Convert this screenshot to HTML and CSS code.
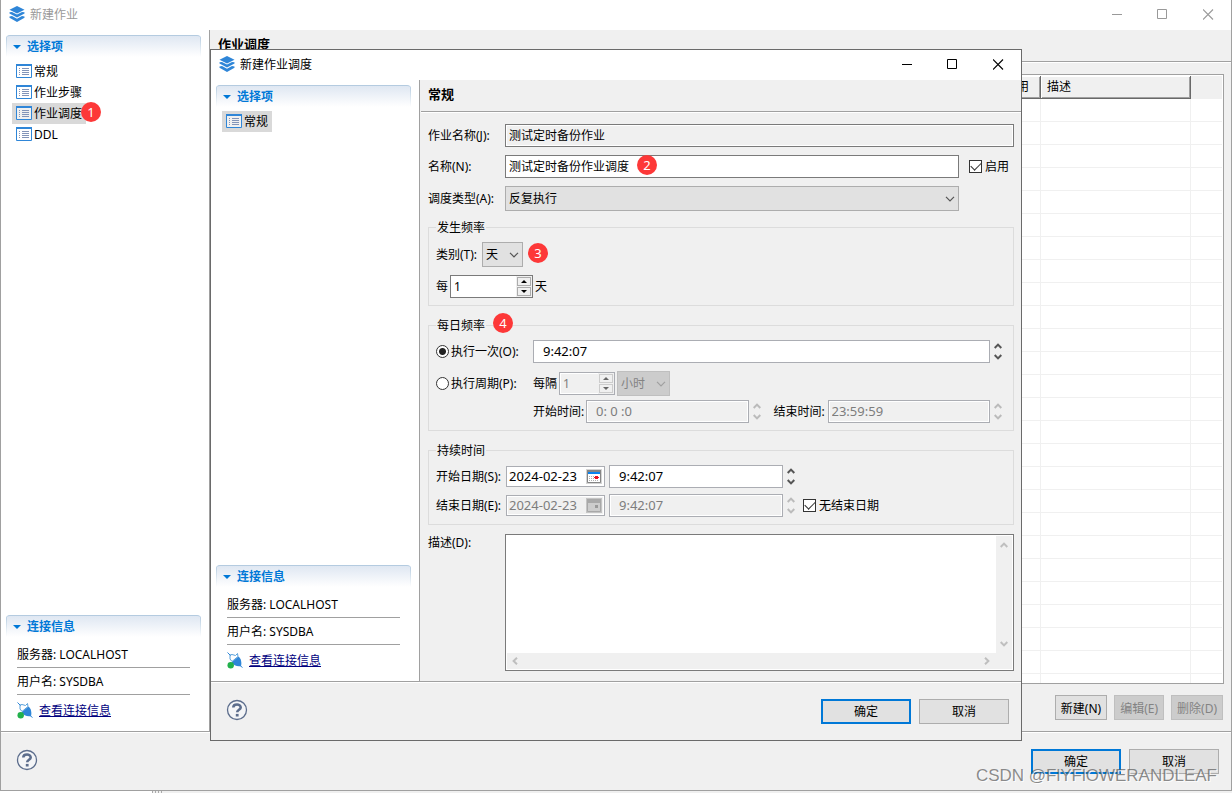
FILE: index.html
```html
<!DOCTYPE html>
<html lang="zh-CN">
<head>
<meta charset="utf-8">
<title>新建作业</title>
<link rel="stylesheet" href="styles.css">
</head>
<body>
<svg class="defs" aria-hidden="true">
  <symbol id="logo" viewBox="0 0 16 16">
    <path fill="#2f86d8" d="M8 0 15.500 3.700 8 7.600.500 3.700Z"/>
    <path fill="#2f86d8" d="M.500 6.200 3 5.900 8 8.600 13 5.900 15.500 6.200V7.500L8 11.600.500 7.500Z"/>
    <path fill="#2f86d8" d="M.500 10.400 3 10 8 12.700 13 10 15.500 10.400V11.700L8 15.900.500 11.700Z"/>
  </symbol>
  <symbol id="list" viewBox="0 0 16 15">
    <path fill="#fff" fill-opacity=".6" stroke="#2f86d8" d="M.5.5h15v13H.5z"/>
    <path fill="#2f86d8" d="M0 0h16v2H0z"/>
    <path stroke="#8294b8" d="M3 4.500h1M6 4.500h7M3 6.500h1M6 6.500h7M3 8.500h1M6 8.500h7M3 10.500h1M6 10.500h7"/>
  </symbol>
  <symbol id="plug" viewBox="0 0 16 17">
    <path fill="#fff" stroke="#5aa2dc" d="M3 3 5 2.500 8.500 3.500 10.500 1.500 11 4.500 5 9.500 3 7Z"/>
    <path stroke="#2f86d8" d="m.5.500 3 3M13 13.500l2.500 2"/>
    <path fill="#2f86d8" d="M4.500 10.500 11.500 4.500c2.300 1.800 3.500 6 2.500 9.500-3.500.8-7.500-.5-9.500-3.500Z"/>
    <circle cx="3.700" cy="13.300" r="3.200" fill="#22b14c"/>
  </symbol>
  <symbol id="help" viewBox="0 0 22 22">
    <circle cx="11" cy="11" r="9.500" fill="#f4f5f7" stroke="#5c6d8c" stroke-width="1.300"/>
    <path fill="none" stroke="#5c6d8c" stroke-width="2.600" d="M7.300 8.600C7.300 4.600 14.700 4.600 14.700 8.400 14.700 10.800 11.200 10.800 11.200 13.300"/>
    <path fill="#5c6d8c" d="M9.800 14.900h2.800v2.600H9.800z"/>
  </symbol>
  <symbol id="min" viewBox="0 0 11 11"><path stroke="currentColor" d="M1 5.500h10"/></symbol>
  <symbol id="max" viewBox="0 0 11 11"><path fill="none" stroke="currentColor" d="M.5.5h9v9h-9z"/></symbol>
  <symbol id="close" viewBox="0 0 11 11"><path stroke="currentColor" stroke-width="1.100" d="m0 .500 10 10M10 .500l-10 10"/></symbol>
  <symbol id="down" viewBox="0 0 10 6"><path fill="none" stroke="currentColor" stroke-width="1.200" d="m1 .8 4 4 4-4"/></symbol>
  <symbol id="chev" viewBox="0 0 8 6"><path fill="none" stroke="currentColor" stroke-width="2" d="m.7 5 3.300-3.400L7.300 5"/></symbol>
  <symbol id="tri" viewBox="0 0 6 3"><path fill="currentColor" d="M3 0 6 3H0z"/></symbol>
  <symbol id="cal" viewBox="0 0 16 15">
    <path fill="#d4d4d4" d="M0 0h16v15H0z"/>
    <path fill="#fff" stroke="#858585" d="M1.500 1.500h13v12h-13z"/>
    <path fill="#858585" d="M1 1h14v2H1z"/>
    <path fill="#0a84f0" d="M2 3h12v2H2z"/>
    <path stroke="#b0b0b0" stroke-dasharray="1 1" d="M3 7.500h6M3 9.500h5M3 11.500h10"/>
    <path fill="#e81123" d="M9 7h3v3H9zM8 8h5v1H8z"/>
  </symbol>
  <symbol id="cal-off" viewBox="0 0 16 15">
    <path fill="#c4c4c4" d="M0 0h16v15H0z"/>
    <path fill="#ccc" stroke="#a8a8a8" d="M1.500 1.500h13v12h-13z"/>
    <path fill="#a8a8a8" d="M1 1h14v4H1z"/>
    <path fill="#999" d="M9 7h3v3H9z"/>
  </symbol>
</svg>

<main class="window window-main">
  <header class="titlebar">
    <svg class="logo"><use href="#logo"/></svg>
    <span class="title">新建作业</span>
    <button class="winbtn" aria-label="最小化"><svg><use href="#min"/></svg></button>
    <button class="winbtn" aria-label="最大化"><svg><use href="#max"/></svg></button>
    <button class="winbtn" aria-label="关闭"><svg><use href="#close"/></svg></button>
  </header>
  <div class="body">
    <aside class="sidebar">
      <section>
        <h2 class="section-title">选择项</h2>
        <ul class="tree">
          <li><svg><use href="#list"/></svg>常规</li>
          <li><svg><use href="#list"/></svg>作业步骤</li>
          <li class="selected"><svg><use href="#list"/></svg>作业调度<span class="badge badge-tree">1</span></li>
          <li><svg><use href="#list"/></svg>DDL</li>
        </ul>
      </section>
      <section class="info">
        <h2 class="section-title">连接信息</h2>
        <p>服务器: LOCALHOST</p>
        <p>用户名: SYSDBA</p>
        <div class="info-link"><svg><use href="#plug"/></svg><a href="#">查看连接信息</a></div>
      </section>
    </aside>
    <div class="pane">
      <h1 class="pane-title">作业调度</h1>
      <div class="jobs">
        <div class="table-box">
          <table>
            <colgroup><col><col class="c-enabled"><col class="c-desc"><col class="c-rest"></colgroup>
            <thead><tr><th></th><th>启用</th><th>描述</th><td></td></tr></thead>
            <tbody>
              <tr><td></td><td></td><td></td><td></td></tr><tr><td></td><td></td><td></td><td></td></tr>
              <tr><td></td><td></td><td></td><td></td></tr><tr><td></td><td></td><td></td><td></td></tr>
              <tr><td></td><td></td><td></td><td></td></tr><tr><td></td><td></td><td></td><td></td></tr>
              <tr><td></td><td></td><td></td><td></td></tr><tr><td></td><td></td><td></td><td></td></tr>
              <tr><td></td><td></td><td></td><td></td></tr><tr><td></td><td></td><td></td><td></td></tr>
              <tr><td></td><td></td><td></td><td></td></tr><tr><td></td><td></td><td></td><td></td></tr>
              <tr><td></td><td></td><td></td><td></td></tr><tr><td></td><td></td><td></td><td></td></tr>
              <tr><td></td><td></td><td></td><td></td></tr><tr><td></td><td></td><td></td><td></td></tr>
              <tr><td></td><td></td><td></td><td></td></tr><tr><td></td><td></td><td></td><td></td></tr>
              <tr><td></td><td></td><td></td><td></td></tr><tr><td></td><td></td><td></td><td></td></tr>
              <tr><td></td><td></td><td></td><td></td></tr><tr><td></td><td></td><td></td><td></td></tr>
              <tr><td></td><td></td><td></td><td></td></tr><tr><td></td><td></td><td></td><td></td></tr>
              <tr><td></td><td></td><td></td><td></td></tr><tr><td></td><td></td><td></td><td></td></tr>
            </tbody>
          </table>
        </div>
        <div class="actions">
          <button class="btn">新建(N)</button>
          <button class="btn" disabled>编辑(E)</button>
          <button class="btn" disabled>删除(D)</button>
        </div>
      </div>
    </div>
  </div>
  <footer class="footer">
    <button class="help" aria-label="帮助"><svg><use href="#help"/></svg></button>
    <button class="btn wide primary">确定</button>
    <button class="btn wide">取消</button>
  </footer>
</main>
<div class="desktop"><span></span></div>

<div class="window dialog" role="dialog" aria-label="新建作业调度">
  <header class="titlebar">
    <svg class="logo"><use href="#logo"/></svg>
    <span class="title">新建作业调度</span>
    <button class="winbtn" aria-label="最小化"><svg><use href="#min"/></svg></button>
    <button class="winbtn" aria-label="最大化"><svg><use href="#max"/></svg></button>
    <button class="winbtn" aria-label="关闭"><svg><use href="#close"/></svg></button>
  </header>
  <div class="body">
    <aside class="sidebar">
      <section>
        <h2 class="section-title">选择项</h2>
        <ul class="tree">
          <li class="selected"><svg><use href="#list"/></svg>常规</li>
        </ul>
      </section>
      <section class="info">
        <h2 class="section-title">连接信息</h2>
        <p>服务器: LOCALHOST</p>
        <p>用户名: SYSDBA</p>
        <div class="info-link"><svg><use href="#plug"/></svg><a href="#">查看连接信息</a></div>
      </section>
    </aside>
    <div class="pane">
      <h1 class="pane-title">常规</h1>
      <form class="form">
        <div class="row">
          <label class="name" for="job">作业名称(J):</label>
          <input class="text grow" id="job" type="text" value="测试定时备份作业" readonly>
        </div>
        <div class="row">
          <label class="name" for="name">名称(N):</label>
          <div class="field grow">
            <input class="text" id="name" type="text" value="测试定时备份作业调度">
            <span class="badge badge-name">2</span>
          </div>
          <label class="check enable"><input type="checkbox" checked>启用</label>
        </div>
        <div class="row">
          <label class="name" for="type">调度类型(A):</label>
          <div class="field grow">
            <select id="type"><option>反复执行</option></select>
            <svg class="arrow"><use href="#down"/></svg>
          </div>
          <span class="enable"></span>
        </div>

        <fieldset>
          <legend>发生频率</legend>
          <div class="row">
            <label class="kind" for="kind">类别(T):</label>
            <div class="field w-kind">
              <select id="kind"><option>天</option></select>
              <svg class="arrow"><use href="#down"/></svg>
            </div>
            <span class="badge badge-kind">3</span>
          </div>
          <div class="row near">
            <label for="every">每</label>
            <span class="spinner w-every">
              <input id="every" type="text" value="1">
              <span class="steps"><button type="button" aria-label="增加"><svg><use href="#tri"/></svg></button><button type="button" aria-label="减少"><svg class="flip"><use href="#tri"/></svg></button></span>
            </span>
            <span>天</span>
          </div>
        </fieldset>

        <fieldset>
          <legend>每日频率<span class="badge badge-daily">4</span></legend>
          <div class="row">
            <label class="check mode"><input type="radio" name="mode" checked>执行一次(O):</label>
            <input class="text time grow" type="text" aria-label="执行时间" value="9:42:07">
            <span class="updown"><button type="button" aria-label="增加"><svg><use href="#chev"/></svg></button><button type="button" aria-label="减少"><svg class="flip"><use href="#chev"/></svg></button></span>
          </div>
          <div class="row near">
            <label class="check mode"><input type="radio" name="mode">执行周期(P):</label>
            <label for="gap">每隔</label>
            <span class="spinner off w-gap">
              <input id="gap" type="text" value="1" disabled>
              <span class="steps"><button type="button" aria-label="增加" disabled><svg><use href="#tri"/></svg></button><button type="button" aria-label="减少" disabled><svg class="flip"><use href="#tri"/></svg></button></span>
            </span>
            <div class="field w-unit">
              <select aria-label="单位" disabled><option>小时</option></select>
              <svg class="arrow off"><use href="#down"/></svg>
            </div>
          </div>
          <div class="row tight">
            <span class="mode"></span>
            <label class="time-name" for="from">开始时间:</label>
            <input class="text time grow" id="from" type="text" value="0: 0 :0" disabled>
            <span class="updown off"><button type="button" aria-label="增加" disabled><svg><use href="#chev"/></svg></button><button type="button" aria-label="减少" disabled><svg class="flip"><use href="#chev"/></svg></button></span>
            <label class="time-name second" for="to">结束时间:</label>
            <input class="text date grow" id="to" type="text" value="23:59:59" disabled>
            <span class="updown off"><button type="button" aria-label="增加" disabled><svg><use href="#chev"/></svg></button><button type="button" aria-label="减少" disabled><svg class="flip"><use href="#chev"/></svg></button></span>
          </div>
        </fieldset>

        <fieldset>
          <legend>持续时间</legend>
          <div class="row">
            <label class="day-name" for="start">开始日期(S):</label>
            <span class="datebox"><input id="start" type="text" value="2024-02-23"><button type="button" aria-label="选择日期"><svg><use href="#cal"/></svg></button></span>
            <input class="text time w-time" type="text" aria-label="开始时刻" value="9:42:07">
            <span class="updown"><button type="button" aria-label="增加"><svg><use href="#chev"/></svg></button><button type="button" aria-label="减少"><svg class="flip"><use href="#chev"/></svg></button></span>
          </div>
          <div class="row snug">
            <label class="day-name" for="end">结束日期(E):</label>
            <span class="datebox off"><input id="end" type="text" value="2024-02-23" disabled><button type="button" aria-label="选择日期" disabled><svg><use href="#cal-off"/></svg></button></span>
            <input class="text time w-time" type="text" aria-label="结束时刻" value="9:42:07" disabled>
            <span class="updown off"><button type="button" aria-label="增加" disabled><svg><use href="#chev"/></svg></button><button type="button" aria-label="减少" disabled><svg class="flip"><use href="#chev"/></svg></button></span>
            <label class="check endless"><input type="checkbox" checked>无结束日期</label>
          </div>
        </fieldset>

        <div class="row memo-row">
          <label class="name" for="memo">描述(D):</label>
          <div class="memo grow">
            <textarea id="memo"></textarea>
            <div class="vbar"><svg><use href="#chev"/></svg><svg class="flip"><use href="#chev"/></svg></div>
            <div class="hbar"><svg class="left"><use href="#chev"/></svg><svg class="right"><use href="#chev"/></svg></div>
          </div>
        </div>
      </form>
    </div>
  </div>
  <footer class="footer">
    <button class="help" aria-label="帮助"><svg><use href="#help"/></svg></button>
    <button class="btn wide primary">确定</button>
    <button class="btn wide">取消</button>
  </footer>
</div>
<div class="watermark">CSDN @FlYFlOWERANDLEAF</div>
</body>
</html>
```

FILE: styles.css
```css
* { box-sizing: border-box; }

body {
  margin: 0;
  height: 100vh;
  display: flex;
  flex-direction: column;
  position: relative;
  overflow: hidden;
  background: #f0f0f0;
  color: #000;
  font: 12px/16px "Noto Sans", "Noto Sans CJK SC", sans-serif;
}

button, input, select, textarea { font: inherit; color: inherit; margin: 0; }
svg { display: block; flex: none; }
.defs { position: absolute; width: 0; height: 0; }
.flip { transform: rotate(180deg); }
.grow { flex: 1; min-width: 0; }

/* windows */
.window { display: flex; flex-direction: column; background: #f0f0f0; }
.window-main { flex: 1; min-height: 0; border: 1px solid #a0a0a0; border-top: 0; }
.window-main .titlebar { color: #999; }
.dialog {
  position: absolute;
  top: 49px;
  right: 210px;
  bottom: 52px;
  left: 210px;
  border: 1px solid #6a6a6a;
}

.titlebar { display: flex; height: 30px; padding-left: 8px; background: #fff; }
.logo { width: 16px; height: 16px; margin: 6px 5px 0 0; }
.title { flex: 1; padding-top: 7px; }
.winbtn { display: flex; justify-content: center; width: 46px; padding: 9px 0 0; border: 0; background: none; }
.winbtn svg { width: 11px; height: 11px; }

.body { flex: 1; min-height: 0; display: flex; }

/* sidebar */
.sidebar {
  width: 209px;
  flex: none;
  display: flex;
  flex-direction: column;
  justify-content: space-between;
  padding: 5px 8px 4px 5px;
  background: #fff;
  border-right: 1px solid #a0a0a0;
}
.section-title {
  display: flex;
  align-items: center;
  gap: 6px;
  height: 22px;
  margin: 0 0 4px;
  padding-left: 7px;
  border-top: 1px solid #b4cbe0;
  border-radius: 4px 4px 0 0;
  background:
    linear-gradient(#b4cbe0, #fff) left / 1px 100% no-repeat,
    linear-gradient(#b4cbe0, #fff) right / 1px 100% no-repeat,
    linear-gradient(#dfe7f2, #fff);
  color: #0078d7;
  font-size: 12px;
  font-weight: bold;
}
.section-title::before { content: ""; border: 4px solid transparent; border-top-color: #0078d7; border-bottom: 0; }
.tree { margin: 0; padding: 0 0 0 6px; list-style: none; }
.tree li { position: relative; display: flex; align-items: center; gap: 2px; width: fit-content; height: 21px; padding: 0 4px; }
.tree .selected { background: #d9d9d9; }
.tree svg { width: 16px; height: 15px; }
.info p { height: 27px; margin: 0 11px; padding-top: 6px; border-bottom: 1px solid #a0a0a0; }
.info-link { display: flex; align-items: center; gap: 6px; height: 32px; padding-left: 10px; }
.info-link svg { width: 16px; height: 17px; margin: 0 0 2px 1px; }
.info-link a { color: #000080; }

/* content pane */
.pane { flex: 1; min-width: 0; display: flex; flex-direction: column; padding-left: 1px; }
.pane-title {
  height: 32px;
  margin: 0;
  padding: 6px 7px 0;
  border-bottom: 1px solid #a0a0a0;
  box-shadow: 0 1px #fff;
  font-size: 13px;
  line-height: 16px;
}

.jobs { flex: 1; min-height: 0; display: flex; flex-direction: column; padding: 12px 7px 11px; }
.table-box { flex: 1; min-height: 0; overflow: hidden; padding: 1px; background: #fff; border: 1px solid #a0a0a0; }
table { width: 100%; border-collapse: separate; border-spacing: 0; table-layout: fixed; }
.c-enabled { width: 42px; }
.c-desc { width: 150px; }
.c-rest { width: 31px; }
th, td { height: 23px; padding: 0; }
th {
  padding-left: 6px;
  background: #f0f0f0;
  border: solid #696969;
  border-width: 0 1px 1px 0;
  box-shadow: inset 1px 1px #fff, inset -1px -1px #a0a0a0;
  text-align: left;
  font-weight: normal;
}
thead td { background: #f0f0f0; }
tbody td { border-bottom: 1px solid #f0f0f0; border-right: 1px solid #f0f0f0; }
tbody td:last-child { border-right: 0; }
.actions { display: flex; justify-content: flex-end; gap: 7px; padding: 11px 1px 0 0; }

.btn { height: 25px; padding: 2px 5px 0; border: 1px solid #adadad; background: #e1e1e1; white-space: nowrap; }
.btn:disabled { border-color: #bfbfbf; background: #ccc; color: #838383; }
.btn.wide { width: 90px; }
.btn.primary { border: 2px solid #0078d7; }

.footer {
  display: flex;
  align-items: center;
  gap: 8px;
  height: 59px;
  padding: 0 12px 0 15px;
  border-top: 1px solid #a0a0a0;
  box-shadow: inset 0 1px #fff;
}
.help { margin: 0 auto 2px 0; padding: 0; border: 0; background: none; }
.help svg { width: 22px; height: 22px; }

/* form */
.form { flex: 1; min-height: 0; display: flex; flex-direction: column; gap: 8px; padding: 12px 7px 10px; }
.row { display: flex; align-items: center; white-space: nowrap; }
.name { width: 77px; }
.enable { width: 55px; padding-left: 10px; }
.field { position: relative; }
.text { width: 100%; height: 23px; padding: 0 3px 2px; border: 1px solid #7a7a7a; border-radius: 0; background: #fff; outline: 0; }
.text:read-only, .text:disabled { background: #f0f0f0; box-shadow: inset 0 0 0 1px #fff; }
.text.time, .text.date { border-color: #abadb3; font-size: 13px; }
.text.time { text-indent: 6px; }
input:disabled { color: #7d7d7d; }

select { display: block; width: 100%; height: 25px; padding: 0 3px; border: 1px solid #adadad; border-radius: 0; background: #e1e1e1; appearance: none; }
select:disabled { border-color: #bfbfbf; background: #ccc; color: #838383; opacity: 1; }
.arrow { position: absolute; right: 4px; top: 10px; width: 10px; height: 6px; color: #555; pointer-events: none; }
.arrow.off { color: #a0a0a0; }

.check { display: flex; align-items: center; gap: 3px; }
.check.mode { gap: 2px; }
.check input { appearance: none; flex: none; width: 13px; height: 13px; border: 1px solid #333; background: #fff; }
.check input[type="radio"] { border-radius: 50%; }
.check input[type="radio"]:checked { background: radial-gradient(circle, #222 3px, #fff 4px); }
.check input[type="checkbox"] { display: flex; justify-content: center; align-items: center; }
.check input[type="checkbox"]:checked::before {
  content: "";
  width: 9px;
  height: 5px;
  margin-bottom: 3px;
  border: solid #333;
  border-width: 0 0 1px 1px;
  transform: rotate(-45deg);
}

fieldset { margin: 0; padding: 7px; border: 1px solid #dcdcdc; min-width: 0; }
fieldset + fieldset { margin-top: 3px; }
legend { position: relative; padding: 2px 1px 0; line-height: 14px; }
.near { margin-top: 8px; gap: 2px; }
.tight { margin-top: 4px; }
.snug { margin-top: 6px; }
.kind { width: 46px; }
.w-kind { width: 41px; }
.mode { width: 97px; flex: none; }
.near .mode { width: 95px; }
.w-unit { width: 53px; }
.time-name { width: 53px; }
.second { width: 63px; padding-left: 9px; }
.day-name { width: 70px; }
.w-time { width: 174px; }
.endless { padding-left: 4px; }

.spinner { display: flex; height: 23px; background: #fff; border: 1px solid #7a7a7a; }
.spinner input { flex: 1; min-width: 0; padding: 0 3px; border: 0; background: none; outline: 0; }
.spinner.off { border-color: #abadb3; background: #f0f0f0; box-shadow: inset 0 0 0 1px #fff; }
.w-every { width: 83px; }
.w-gap { width: 56px; }
.steps { display: flex; flex-direction: column; gap: 1px; width: 16px; padding: 1px; background: #f0f0f0; }
.steps button { flex: 1; display: flex; align-items: center; justify-content: center; padding: 0; border: 1px solid #acacac; background: #f0f0f0; }
.steps svg { width: 6px; height: 3px; }
.off .steps button { border-color: #ccc; color: #666; }

.updown { display: flex; flex-direction: column; align-items: center; gap: 5px; width: 16px; color: #555; }
.updown button { padding: 0; border: 0; background: none; }
.updown svg, .memo svg { width: 8px; height: 6px; }
.updown.off { color: #bbb; }

.datebox { display: flex; align-items: center; width: 99px; height: 21px; margin-right: 4px; padding-right: 2px; background: #fff; border: 1px solid #abadb3; }
.datebox input { flex: 1; min-width: 0; padding: 0 2px 2px; border: 0; background: none; outline: 0; font-size: 13px; }
.datebox button { padding: 0; border: 0; background: none; }
.datebox svg { width: 16px; height: 15px; }
.datebox.off { background: #f0f0f0; box-shadow: inset 0 0 0 1px #fff; }

.memo-row { flex: 1; min-height: 0; align-items: stretch; padding-top: 1px; }
.memo-row .name { padding-top: 1px; }
.memo {
  display: grid;
  grid-template: 1fr 16px / 1fr 16px;
  padding: 1px;
  background: #fff;
  border: 1px solid #7a7a7a;
  color: #bfbfbf;
}
.memo textarea { width: 100%; height: 100%; padding: 2px; border: 0; resize: none; outline: 0; color: #000; }
.vbar { display: flex; flex-direction: column; justify-content: space-between; align-items: center; padding: 6px 0; background: #f0f0f0; }
.hbar { grid-column: 1 / -1; display: flex; justify-content: space-between; align-items: center; padding: 0 21px 0 4px; background: #f0f0f0; }
.left { transform: rotate(-90deg); }
.right { transform: rotate(90deg); }

/* numbered markers */
.badge {
  width: 20px;
  height: 20px;
  border-radius: 50%;
  background: #fd3838;
  color: #fff;
  font-size: 13px;
  line-height: 20px;
  text-align: center;
}
.badge-tree { position: absolute; left: 69px; top: -1px; }
.badge-name { position: absolute; left: 132px; top: 0; }
.badge-kind { margin: 0 0 3px 5px; }
.badge-daily { position: absolute; left: 57px; top: -4px; }

.desktop { height: 2px; padding-left: 152px; background: linear-gradient(90deg, #fff 152px, #f0f0f0 152px); }
.desktop span { display: block; width: 10px; height: 2px; background: repeating-linear-gradient(90deg, #aaa 0 1px, #f0f0f0 1px 3px); }

.watermark {
  position: absolute;
  right: 15px;
  bottom: 6px;
  color: rgba(90, 90, 90, 0.7);
  font: 17px/22px "Liberation Sans", sans-serif;
  text-shadow: 1px 1px rgba(255, 255, 255, 0.8);
  pointer-events: none;
}
```
